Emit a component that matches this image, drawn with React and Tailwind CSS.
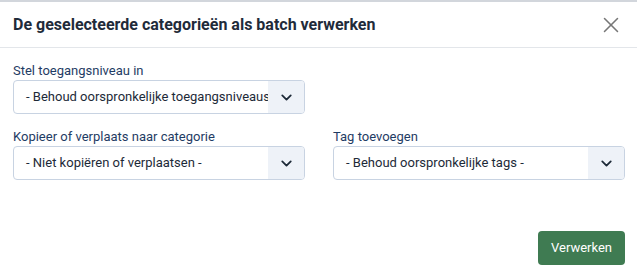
import { ChevronDown, X } from 'lucide-react'

function Select({ value }) {
  return (
    <div className="relative h-[34px] w-full overflow-hidden rounded border border-[#c8d3e2] bg-white">
      <div className="whitespace-nowrap pl-[12px] pr-[36px] text-[13px] leading-[32px] text-[#1d2a38]">{value}</div>
      <div className="absolute right-0 top-0 flex h-full w-[36px] items-center justify-center bg-[#eef2f8]">
        <ChevronDown size={17} strokeWidth={2.5} className="text-[#1d2a38]" />
      </div>
    </div>
  )
}

function Field({ label, value }) {
  return (
    <div className="flex flex-col gap-[1px]">
      <label className="text-[13px] leading-[16px] text-[#1f3c64]">{label}</label>
      <Select value={value} />
    </div>
  )
}

export default function App() {
  return (
    <div className="h-[275px] w-[637px] bg-white font-['Roboto',sans-serif]">
      <div className="h-[2px] bg-[#d2d6dc]" />
      <div className="flex h-[46px] items-center justify-between border-b border-[#e3e6ea] pl-[13px] pr-[13px]">
        <h1 className="text-[16px] font-bold text-[#1f2b3a]">De geselecteerde categorieën als batch verwerken</h1>
        <X size={26} strokeWidth={1.4} className="text-[#777]" />
      </div>
      <div className="pl-[13px] pr-[12px] pt-[15px]">
        <div className="w-[292px]">
          <Field label="Stel toegangsniveau in" value="- Behoud oorspronkelijke toegangsniveaus -" />
        </div>
        <div className="mt-[15px] grid grid-cols-2 gap-[28px]">
          <Field label="Kopieer of verplaats naar categorie" value="- Niet kopiëren of verplaatsen -" />
          <Field label="Tag toevoegen" value="- Behoud oorspronkelijke tags -" />
        </div>
        <div className="mt-[51px] flex justify-end">
          <button className="h-[34px] rounded bg-[#3f7b52] px-[13px] text-[13px] text-white">Verwerken</button>
        </div>
      </div>
    </div>
  )
}
